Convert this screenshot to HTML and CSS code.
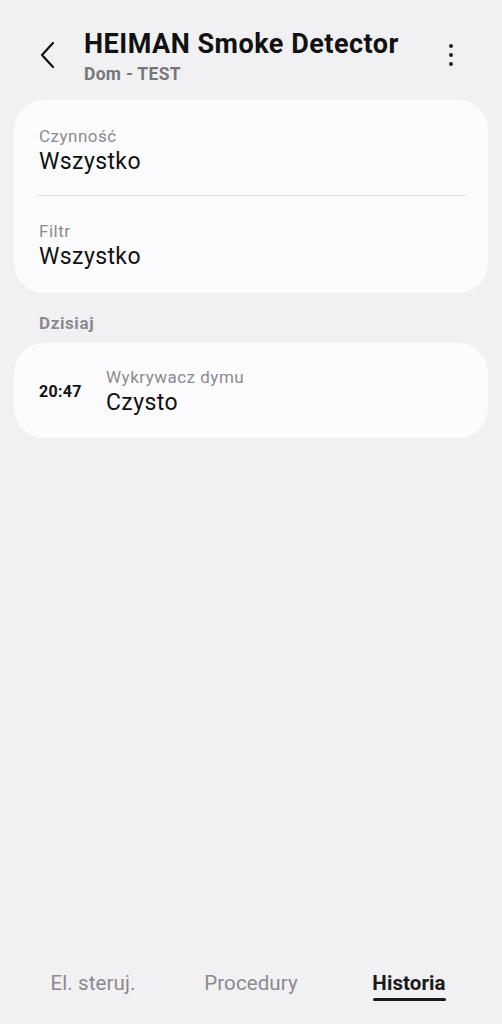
FILE: index.html
```html
<!DOCTYPE html>
<html lang="pl">
<head>
    <meta charset="UTF-8">
    <meta name="viewport" content="width=device-width, initial-scale=1.0">
    <title>Historia</title>
    <link rel="stylesheet" href="styles.css">
</head>
<body>
    <div class="screen">
        <header class="topbar">
            <button class="back" aria-label="Wstecz">
                <svg width="20" height="30" viewBox="0 0 20 30"><path d="M15 3 L4 15 L15 27" fill="none" stroke="#111" stroke-width="2.2" stroke-linecap="round" stroke-linejoin="round"/></svg>
            </button>
            <div class="titles">
                <h1>HEIMAN Smoke Detector</h1>
                <div class="sub">Dom - TEST</div>
            </div>
            <button class="more" aria-label="Więcej">
                <span></span><span></span><span></span>
            </button>
        </header>

        <section class="card filters">
            <div class="filter">
                <div class="label">Czynność</div>
                <div class="value">Wszystko</div>
            </div>
            <div class="divider"></div>
            <div class="filter">
                <div class="label">Filtr</div>
                <div class="value">Wszystko</div>
            </div>
        </section>

        <h2 class="day">Dzisiaj</h2>

        <section class="card event">
            <div class="time">20:47</div>
            <div class="info">
                <div class="label">Wykrywacz dymu</div>
                <div class="value">Czysto</div>
            </div>
        </section>

        <div class="spacer"></div>

        <nav class="tabs">
            <a class="tab">El. steruj.</a>
            <a class="tab">Procedury</a>
            <a class="tab active">Historia</a>
        </nav>
    </div>
</body>
</html>
```

FILE: styles.css
```css
html, body {
    margin: 0;
    padding: 0;
    background-color: #f1f1f3;
}
body {
    font-family: Roboto, "Noto Sans", Arial, sans-serif;
    color: #111;
}
.screen {
    height: 1024px;
    display: flex;
    flex-direction: column;
    padding: 0 14px;
    box-sizing: border-box;
}
.topbar {
    display: flex;
    align-items: flex-start;
    padding-top: 27px;
    height: 100px;
    box-sizing: border-box;
}
button {
    background: none;
    border: 0;
    padding: 0;
}
.back {
    width: 70px;
    padding-left: 24px;
    padding-top: 13px;
    text-align: left;
    box-sizing: border-box;
}
.titles {
    flex: 1;
}
h1 {
    margin: 0;
    font-size: 27px;
    font-weight: 700;
    line-height: 34px;
    letter-spacing: 0.5px;
}
.sub {
    font-size: 17.5px;
    font-weight: 700;
    color: #77777b;
    line-height: 24px;
    letter-spacing: 0.3px;
    margin-top: 1px;
}
.more {
    width: 24px;
    margin-right: 25px;
    padding-top: 17px;
    display: flex;
    flex-direction: column;
    align-items: center;
    gap: 5px;
}
.more span {
    width: 4px;
    height: 4px;
    border-radius: 50%;
    background: #222;
}
.card {
    background: #fcfcfe;
    border-radius: 30px;
}
.filters {
    padding: 0 22px 0 25px;
}
.filter {
    height: 95px;
    padding-top: 25px;
    box-sizing: border-box;
}
.label {
    font-size: 17px;
    color: #8a8a8e;
    line-height: 22px;
    letter-spacing: 0.5px;
}
.value {
    font-size: 23px;
    line-height: 30px;
    letter-spacing: 0.4px;
}
.divider {
    height: 1px;
    background: #dfdfe2;
    margin-left: -2px;
}
.filters .filter:last-child {
    height: 97px;
    padding-top: 24px;
}
.day {
    margin: 0;
    font-size: 17px;
    font-weight: 700;
    color: #8a8a8e;
    letter-spacing: 0.6px;
    padding: 19px 0 0 25px;
    height: 50px;
    box-sizing: border-box;
    line-height: 22px;
}
.event {
    height: 95px;
    display: flex;
    align-items: center;
    padding-left: 25px;
}
.time {
    width: 67px;
    font-size: 16px;
    font-weight: 700;
    letter-spacing: 0.3px;
    padding-top: 2px;
}
.event .info {
    padding-top: 2px;
}
.spacer {
    flex: 1;
}
.tabs {
    display: flex;
    height: 53px;
    box-sizing: border-box;
}
.tab {
    flex: 1;
    text-align: center;
    font-size: 20.5px;
    letter-spacing: 0.1px;
    color: #8a8a8e;
}
.tab.active {
    color: #1a1a1c;
    font-weight: 700;
}
.tab.active::after {
    content: "";
    display: block;
    width: 73px;
    height: 3px;
    border-radius: 2px;
    background: #1a1a1c;
    margin: 3px auto 0;
}
```
